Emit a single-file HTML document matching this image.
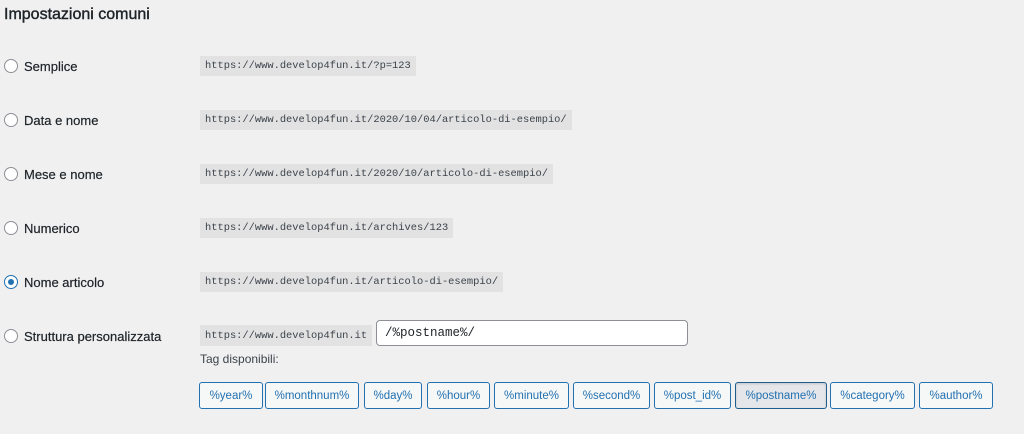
<!DOCTYPE html>
<html><head><meta charset="utf-8"><style>
body{margin:0;width:1024px;height:434px;background:#f0f0f1;font-family:"Liberation Sans",sans-serif;color:#1d2327;position:relative;overflow:hidden}
.a{position:absolute}
h2{position:absolute;left:4px;top:6px;margin:0;font-size:16px;font-weight:normal;color:#1d2327;-webkit-text-stroke:0.4px #1d2327}
.r{position:absolute;left:4px;width:12px;height:12px;border:1px solid #8c8f94;border-radius:50%;background:#fff}
.r.on{border-color:#2271b1}
.r.on:after{content:"";position:absolute;left:3px;top:3px;width:6px;height:6px;border-radius:50%;background:#2271b1}
.l{position:absolute;left:24px;font-size:13px;-webkit-text-stroke:0.2px #1d2327}
code{position:absolute;left:200px;height:20px;line-height:21px;padding:0 5px;background:#e2e2e3;font-family:"Liberation Mono",monospace;font-size:10.4px;color:#3c434a}
.b{position:absolute;top:382px;height:25px;border:1px solid #2271b1;border-radius:3px;background:#f6f7f7;color:#2271b1;font-size:11.5px;line-height:27px;text-align:center;box-sizing:content-box}
.b.on{background:#e4e6e9;border-color:#1e5d8c;box-shadow:inset 0 1px 2px rgba(0,0,0,.15)}
</style></head><body>
<h2>Impostazioni comuni</h2>
<div class="r" style="top:59px"></div><div class="l" style="top:59px">Semplice</div><code style="top:56px">https://www.develop4fun.it/?p=123</code>
<div class="r" style="top:113px"></div><div class="l" style="top:113px">Data e nome</div><code style="top:110px">https://www.develop4fun.it/2020/10/04/articolo-di-esempio/</code>
<div class="r" style="top:167px"></div><div class="l" style="top:167px">Mese e nome</div><code style="top:164px">https://www.develop4fun.it/2020/10/articolo-di-esempio/</code>
<div class="r" style="top:221px"></div><div class="l" style="top:221px">Numerico</div><code style="top:218px">https://www.develop4fun.it/archives/123</code>
<div class="r on" style="top:275px"></div><div class="l" style="top:275px">Nome articolo</div><code style="top:272px">https://www.develop4fun.it/articolo-di-esempio/</code>
<div class="r" style="top:329px"></div><div class="l" style="top:329px">Struttura personalizzata</div><code style="top:325px;height:21px;line-height:22px">https://www.develop4fun.it</code>
<div class="a" style="left:376px;top:320px;border:1px solid #8c8f94;border-radius:4px;background:#fff;font-family:'Liberation Mono',monospace;font-size:12.5px;line-height:24px;padding-left:8px;box-sizing:border-box;width:312px;height:26px">/%postname%/</div>
<div class="a" style="left:200px;top:352px;font-size:12px;color:#3c434a">Tag disponibili:</div>
<div class="b" style="left:199px;width:62px">%year%</div>
<div class="b" style="left:265px;width:92px">%monthnum%</div>
<div class="b" style="left:364px;width:56px">%day%</div>
<div class="b" style="left:427px;width:61px">%hour%</div>
<div class="b" style="left:494px;width:73px">%minute%</div>
<div class="b" style="left:573px;width:75px">%second%</div>
<div class="b" style="left:654px;width:75px">%post_id%</div>
<div class="b on" style="left:735px;width:90px">%postname%</div>
<div class="b" style="left:830px;width:83px">%category%</div>
<div class="b" style="left:919px;width:72px">%author%</div>
</body></html>
